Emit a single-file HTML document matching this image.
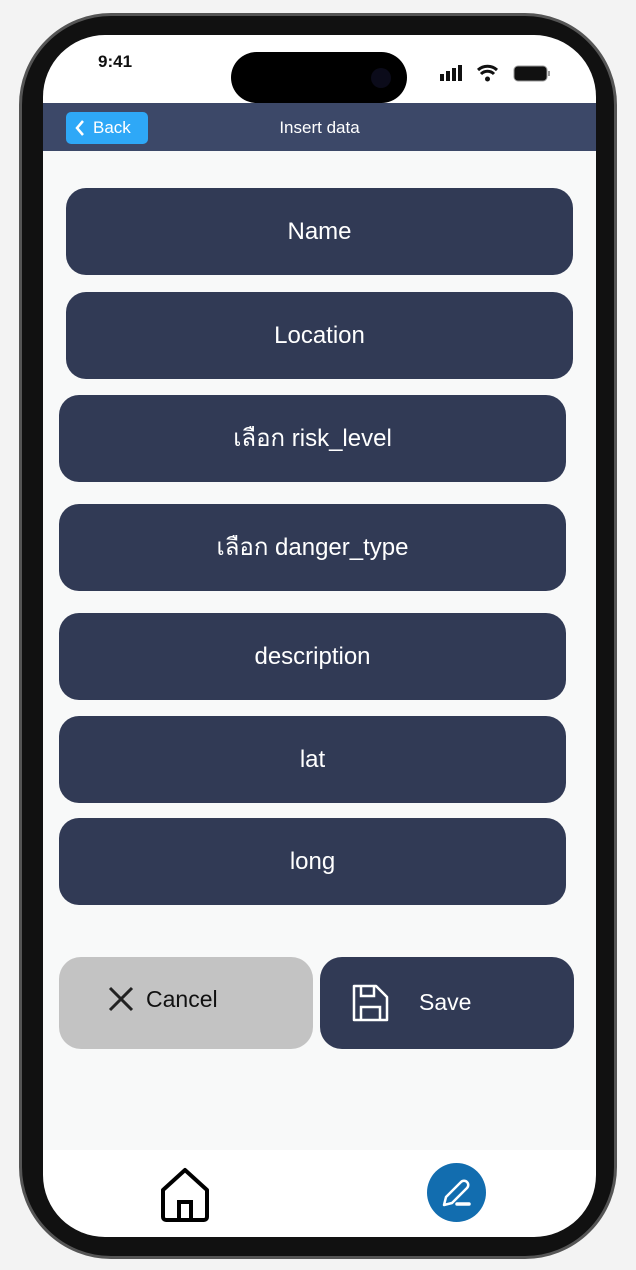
<!DOCTYPE html>
<html><head><meta charset="utf-8"><style>
*{margin:0;padding:0;box-sizing:border-box}
body{width:636px;height:1270px;background:#f3f3f3;position:relative;overflow:hidden;font-family:"Liberation Sans","Noto Sans CJK SC",sans-serif}
.frame{position:absolute;left:19px;top:13px;width:598px;height:1246px;border-radius:92px;background:#111;border:3px solid #555;}
.screen{position:absolute;left:43px;top:35px;width:553px;height:1202px;border-radius:62px;background:#fff;overflow:hidden}
.island{position:absolute;left:231px;top:52px;width:176px;height:51px;border-radius:26px;background:#000;z-index:5}
.time{position:absolute;left:55px;top:17px;font-size:17px;font-weight:bold;color:#111}
.nav{position:absolute;left:0;top:68px;width:553px;height:48px;background:#3c4868}
.back{position:absolute;left:23px;top:9px;width:82px;height:32px;background:#2ea8f7;border-radius:5px;color:#fff;font-size:17px;line-height:32px;padding-left:27px}
.title{position:absolute;left:0;width:553px;top:15px;text-align:center;color:#fff;font-size:17px}
.content{position:absolute;left:0;top:116px;width:553px;height:999px;background:#f8f9f9}
.f{position:absolute;width:507px;height:87px;border-radius:20px;background:#313a55;color:#fff;font-size:24px;text-align:center;line-height:87px}
.btn{position:absolute;top:922px;height:92px;width:254px;border-radius:22px;font-size:23px}
</style></head><body>
<div class="frame"></div>
<div class="screen">
 <div class="time">9:41</div>
 <svg style="position:absolute;left:396px;top:29px" width="115" height="20">
  <rect x="1" y="10" width="4" height="7" fill="#111"/><rect x="7" y="7" width="4" height="10" fill="#111"/><rect x="13" y="4" width="4" height="13" fill="#111"/><rect x="19" y="1" width="4" height="16" fill="#111"/>
  <path d="M39 6a14 14 0 0 1 19 0M42 10a9 9 0 0 1 13 0" stroke="#111" stroke-width="3" fill="none"/><circle cx="48.5" cy="15" r="2.5" fill="#111"/>
  <rect x="75" y="2" width="33" height="15" rx="4" fill="#111" stroke="#999" stroke-width="1"/><rect x="109" y="7" width="2" height="5" fill="#999"/>
 </svg>
 <div class="nav"><div class="back">Back</div>
  <svg style="position:absolute;left:31px;top:17px" width="12" height="16"><path d="M9 1L3 8l6 7" stroke="#fff" stroke-width="2.5" fill="none"/></svg>
  <div class="title">Insert data</div></div>
 <div class="content">
  <div class="f" style="left:23px;top:37px">Name</div>
  <div class="f" style="left:23px;top:141px">Location</div>
  <div class="f" style="left:16px;top:244px">เลือก risk_level</div>
  <div class="f" style="left:16px;top:353px">เลือก danger_type</div>
  <div class="f" style="left:16px;top:462px">description</div>
  <div class="f" style="left:16px;top:565px">lat</div>
  <div class="f" style="left:16px;top:667px">long</div>
  <div class="btn" style="left:16px;top:806px;background:#c3c3c3;color:#111">
   <svg style="position:absolute;left:48px;top:28px" width="28" height="28"><path d="M3 3l22 22M25 3L3 25" stroke="#222" stroke-width="3"/></svg>
   <span style="position:absolute;left:87px;top:29px">Cancel</span></div>
  <div class="btn" style="left:277px;top:806px;background:#313a55;color:#fff">
   <svg style="position:absolute;left:31px;top:26px" width="40" height="40"><path d="M3 3h22l11 11v23H3z" stroke="#fff" stroke-width="2.5" fill="none" stroke-linejoin="round"/><path d="M10 3v10h13V3M10 37V24h19v13" stroke="#fff" stroke-width="2.5" fill="none"/></svg>
   <span style="position:absolute;left:99px;top:32px">Save</span></div>
 </div>
 <svg style="position:absolute;left:115px;top:1131px" width="54" height="60"><path d="M5 24L27 4l22 20v27a3 3 0 0 1-3 3H8a3 3 0 0 1-3-3z" stroke="#000" stroke-width="4" fill="none" stroke-linejoin="round"/><path d="M21 54V36h12v18" stroke="#000" stroke-width="4" fill="none"/></svg>
 <div style="position:absolute;left:384px;top:1128px;width:59px;height:59px;border-radius:50%;background:#126daf"></div>
 <svg style="position:absolute;left:384px;top:1128px" width="59" height="59"><path d="M17 42l2-8 15-15a4 4 0 0 1 6 6L25 40z" stroke="#fff" stroke-width="2.5" fill="none" stroke-linejoin="round"/><path d="M30 41h12" stroke="#fff" stroke-width="3.5" stroke-linecap="round"/></svg>
</div>
<div class="island"><div style="position:absolute;left:140px;top:16px;width:20px;height:20px;border-radius:50%;background:#0b0b1a"></div></div>
</body></html>
